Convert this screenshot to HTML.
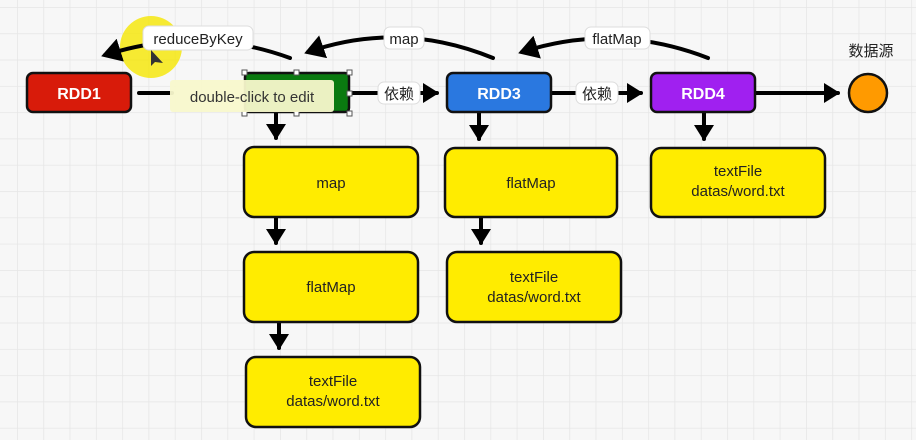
<!DOCTYPE html>
<html><head><meta charset="utf-8"><style>
html,body{margin:0;padding:0;width:916px;height:440px;overflow:hidden;background:#f7f7f7}
svg{display:block}
text{font-family:"Liberation Sans","Noto Sans CJK SC",sans-serif}
</style></head><body>
<svg width="916" height="440" viewBox="0 0 916 440" xmlns="http://www.w3.org/2000/svg">
<defs>
<pattern id="g" x="17" y="7" width="26.3" height="26.3" patternUnits="userSpaceOnUse">
<path d="M0 0H26.3M0 0V26.3" stroke="#e6e6e6" stroke-width="1.5" fill="none"/>
</pattern>
<marker id="a" markerWidth="5" markerHeight="5" refX="3.5" refY="2.5" orient="auto" markerUnits="strokeWidth">
<path d="M0,0 L4,2.5 L0,5 Z" fill="#000"/>
</marker>
<marker id="b" markerWidth="6" markerHeight="6" refX="4" refY="3" orient="auto" markerUnits="strokeWidth">
<path d="M0,0 L5,3 L0,6 Z" fill="#000"/>
</marker>
</defs>
<rect width="916" height="440" fill="url(#g)"/>

<circle cx="151" cy="47" r="31" fill="#f5e600" opacity="0.8"/>

<g stroke="#000" stroke-width="4" fill="none" stroke-linecap="round">
<line x1="139" y1="93" x2="172" y2="93"/>
<line x1="349" y1="93" x2="437" y2="93" marker-end="url(#a)"/>
<line x1="551" y1="93" x2="641" y2="93" marker-end="url(#a)"/>
<line x1="755" y1="93" x2="838" y2="93" marker-end="url(#a)"/>
<line x1="276" y1="112" x2="276" y2="138" marker-end="url(#a)"/>
<line x1="276" y1="217" x2="276" y2="243" marker-end="url(#a)"/>
<line x1="279" y1="316" x2="279" y2="348" marker-end="url(#a)"/>
<line x1="479" y1="112" x2="479" y2="139" marker-end="url(#a)"/>
<line x1="481" y1="210" x2="481" y2="243" marker-end="url(#a)"/>
<line x1="704" y1="112" x2="704" y2="139" marker-end="url(#a)"/>
<path d="M290 58 Q200 25 105 55" marker-end="url(#b)"/>
<path d="M493 58 Q400 20 308 52" marker-end="url(#b)"/>
<path d="M708 58 Q615 22 522 52" marker-end="url(#b)"/>
</g>

<g font-size="15" text-anchor="middle">
<rect x="143" y="26" width="110" height="24" rx="6" fill="#fff" stroke="#ddd"/>
<text x="198" y="44" fill="#222">reduceByKey</text>
<rect x="384" y="27" width="40" height="22" rx="6" fill="#fff" stroke="#ddd"/>
<text x="404" y="44" fill="#222">map</text>
<rect x="585" y="27" width="65" height="22" rx="6" fill="#fff" stroke="#ddd"/>
<text x="617" y="44" fill="#222">flatMap</text>
<rect x="378" y="82" width="42" height="22" rx="6" fill="#fff" stroke="#ddd"/>
<text x="399" y="99" fill="#222">依赖</text>
<rect x="576" y="82" width="42" height="22" rx="6" fill="#fff" stroke="#ddd"/>
<text x="597" y="99" fill="#222">依赖</text>
<text x="871" y="56" fill="#222">数据源</text>
</g>

<g stroke="#111" stroke-width="2.5">
<rect x="27" y="73" width="104" height="39" rx="6" fill="#d81b0a"/>
<rect x="245" y="73" width="104" height="39" rx="4" fill="#0a7a10"/>
<rect x="447" y="73" width="104" height="39" rx="6" fill="#2a78e0"/>
<rect x="651" y="73" width="104" height="39" rx="6" fill="#a020f0"/>
<circle cx="868" cy="93" r="19" fill="#ff9a00"/>
</g>
<g font-size="16" font-weight="bold" fill="#fff" text-anchor="middle">
<text x="79" y="99">RDD1</text>
<text x="499" y="99">RDD3</text>
<text x="703" y="99">RDD4</text>
</g>

<g stroke="#111" stroke-width="2.5" fill="#ffec00">
<rect x="244" y="147" width="174" height="70" rx="10"/>
<rect x="244" y="252" width="174" height="70" rx="10"/>
<rect x="246" y="357" width="174" height="70" rx="10"/>
<rect x="445" y="148" width="172" height="69" rx="10"/>
<rect x="447" y="252" width="174" height="70" rx="10"/>
<rect x="651" y="148" width="174" height="69" rx="10"/>
</g>
<g font-size="15" fill="#222" text-anchor="middle">
<text x="331" y="188">map</text>
<text x="331" y="292">flatMap</text>
<text x="333" y="386">textFile</text><text x="333" y="406">datas/word.txt</text>
<text x="531" y="188">flatMap</text>
<text x="534" y="282">textFile</text><text x="534" y="302">datas/word.txt</text>
<text x="738" y="176">textFile</text><text x="738" y="196">datas/word.txt</text>
</g>

<g fill="#fff" stroke="#555" stroke-width="1">
<rect x="242" y="70" width="5" height="5"/><rect x="294" y="70" width="5" height="5"/><rect x="347" y="70" width="5" height="5"/>
<rect x="347" y="91" width="5" height="5"/>
<rect x="242" y="111" width="5" height="5"/><rect x="294" y="111" width="5" height="5"/><rect x="347" y="111" width="5" height="5"/>
</g>

<rect x="170" y="80" width="164" height="32" rx="3" fill="#f8f8cc" opacity="0.95"/>
<text x="252" y="102" font-size="15" fill="#333" text-anchor="middle">double-click to edit</text>

<path d="M151 50 L151 66 L155 62 L163 63 Z" fill="#333"/>
</svg>
</body></html>
